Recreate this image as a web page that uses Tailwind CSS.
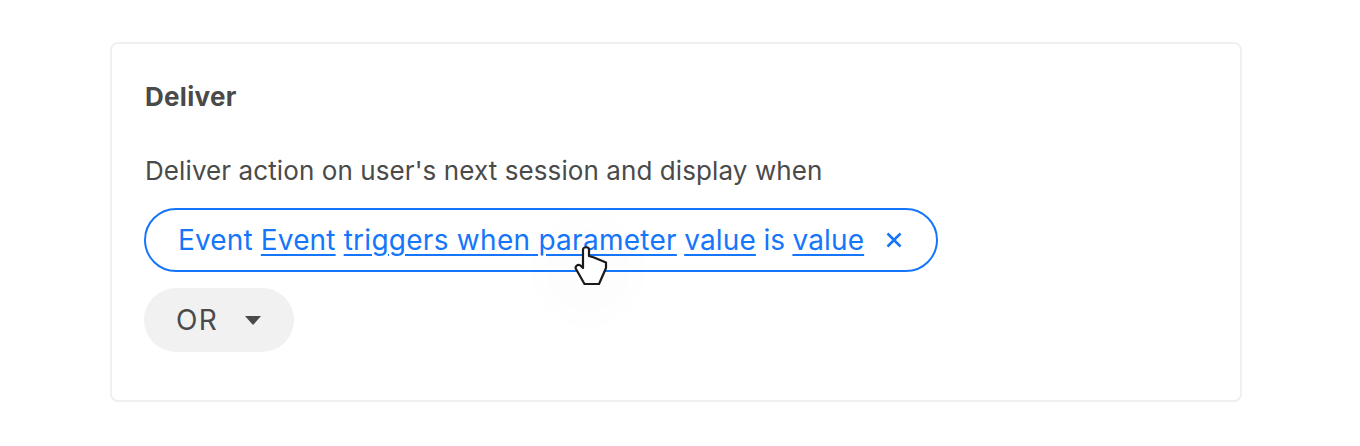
<!doctype html>
<html><head><script src="https://cdn.jsdelivr.net/npm/@tailwindcss/browser@4"></script></head>
<body class="bg-white font-['Inter',sans-serif] text-[#4a4a4a]">
<div class="w-[1360px] h-[446px] pt-[42px] pl-[110px]">
  <div class="w-[1132px] h-[360px] border-2 border-[#f0f0f0] rounded-lg pl-[32px] pt-[35px]">
    <h2 class="pl-px text-[26px] leading-[36px] font-bold tracking-[0.3px]">Deliver</h2>
    <p class="pl-px mt-[38px] text-[26px] leading-[36px] tracking-[0.09px]">Deliver action on user's next session and display when</p>
    <div class="relative mt-[19px] w-[794px] h-[64px] border-2 border-[#1576fb] rounded-full flex items-center pl-[32px] text-[28px] tracking-[0.15px] text-[#1576fb] whitespace-pre">
      <span>Event </span><span class="underline underline-offset-4">Event</span><span> </span><span class="underline underline-offset-4 tracking-[0.27px]">triggers when parameter</span><span class="tracking-[-0.6px]"> </span><span class="underline underline-offset-4">value</span><span class="tracking-[-0.2px]"> is </span><span class="underline underline-offset-4">value</span>
      <svg class="ml-[22px]" width="16" height="16" viewBox="0 0 16 16" fill="none" stroke="#1576fb" stroke-width="2.6"><path d="M1.500 1.500 14.500 14.500M14.500 1.500 1.500 14.500"/></svg>
      <div class="absolute left-[392px] top-[10px] w-[100px] h-[100px] rounded-full bg-black/[0.006] blur-md"></div>
      <svg class="absolute left-[428px] top-[35px]" width="34" height="42" viewBox="0 0 34 42"><path d="M9 4.500C9 1.500 15 1.500 15 4.500V11L20 12.500 32 17.500V23L25 39H10.500L2 24C0.500 21.500 4 18.500 6.500 20.500L9 23Z" fill="#fff" stroke="#1a1a1a" stroke-width="2.200" stroke-linejoin="round"/></svg>
    </div>
    <div class="mt-[16px] w-[150px] h-[64px] rounded-full bg-[#f1f1f1] flex items-center pl-[32px] text-[28px] tracking-[1.4px]">
      <span>OR</span>
      <svg class="ml-[27px]" width="16" height="9" viewBox="0 0 16 9"><path d="M0 0H16L8 9Z" fill="#4a4a4a"/></svg>
    </div>
  </div>
</div>
</body></html>
